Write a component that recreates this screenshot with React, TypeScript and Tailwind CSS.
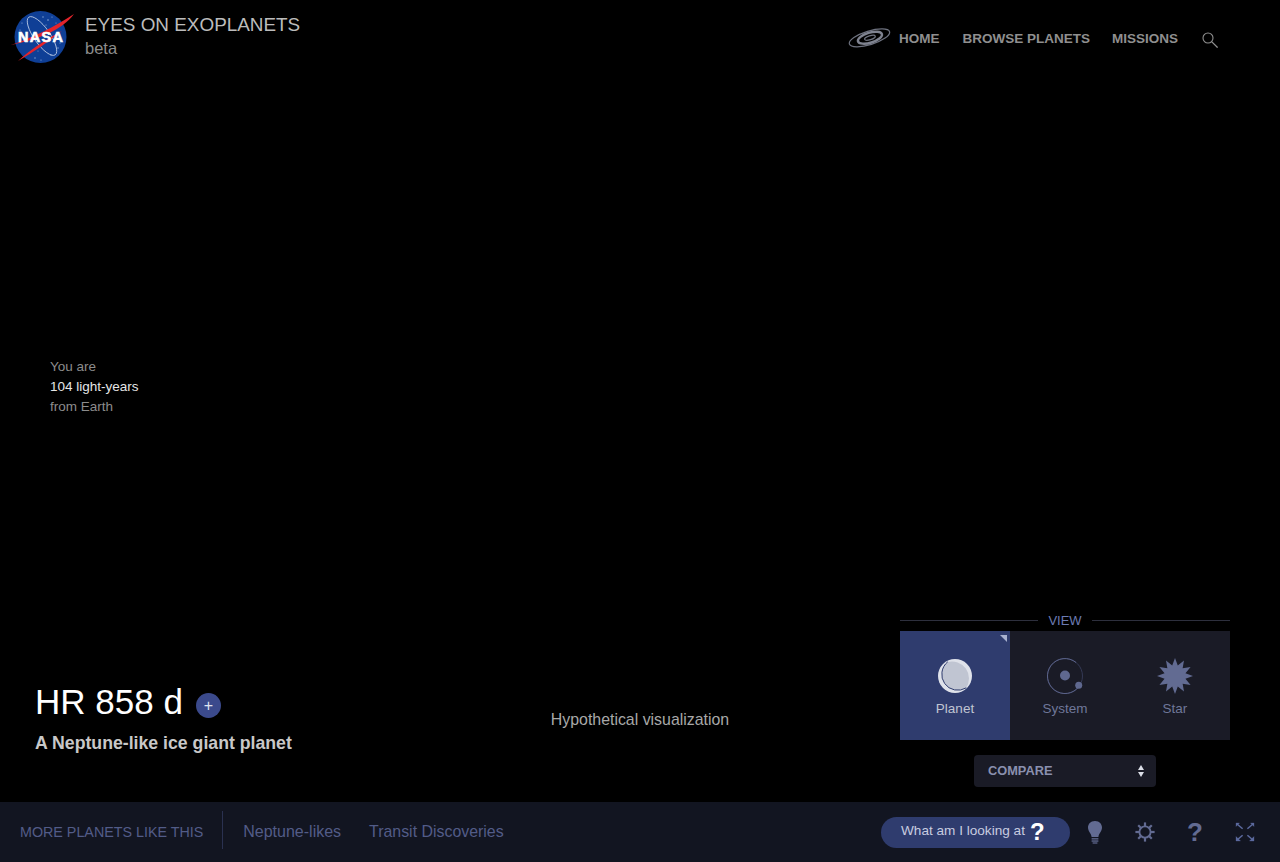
import React from "react";

const font = { fontFamily: '"Liberation Sans", Arial, sans-serif' };

function NasaLogo() {
  return (
    <svg width="66" height="56" viewBox="0 0 66 56" className="block">
      <circle cx="30.5" cy="27" r="26" fill="#0f3f96" />
      <g fill="#8fabd8">
        <circle cx="33" cy="7" r="0.7" /><circle cx="38" cy="10" r="0.8" /><circle cx="42" cy="7" r="0.6" />
        <circle cx="36" cy="15" r="0.6" /><circle cx="12" cy="13" r="0.6" /><circle cx="10" cy="20" r="0.6" />
        <circle cx="48" cy="38" r="0.7" /><circle cx="50" cy="33" r="0.6" /><circle cx="25" cy="48" r="0.7" />
        <circle cx="31" cy="50" r="0.6" /><circle cx="19" cy="43" r="0.6" /><circle cx="41" cy="45" r="0.7" />
        <circle cx="46" cy="13" r="0.5" /><circle cx="28" cy="41" r="0.5" />
      </g>
      <ellipse cx="32" cy="26" rx="23" ry="8" transform="rotate(55 32 26)" fill="none" stroke="#c2cfe8" strokeWidth="0.8" />
      <path d="M64 4C52 20 30 29 1 35C24 27 44 17 64 4Z" fill="#e3242b" />
      <path d="M8 51C20 40 32 32 48 23L52 21C38 32 24 42 8 51Z" fill="#e3242b" />
      <text x="8" y="32" textLength="45" lengthAdjust="spacing" fill="#ffffff" fontSize="14.5" fontWeight="700" stroke="#ffffff" strokeWidth="0.6" style={font}>NASA</text>
    </svg>
  );
}

function Galaxy() {
  return (
    <svg width="44" height="22" viewBox="0 0 44 22" fill="none" className="block">
      <g transform="rotate(-17 22 11)">
        <ellipse cx="22.5" cy="11" rx="21" ry="6.8" stroke="#6d717e" strokeWidth="1.2" />
        <ellipse cx="23" cy="11" rx="12.5" ry="5" stroke="#7f8390" strokeWidth="2.4" />
        <ellipse cx="23" cy="11" rx="5.5" ry="2" stroke="#6d717e" strokeWidth="1.3" />
      </g>
    </svg>
  );
}

function Search() {
  return (
    <svg width="16" height="16" viewBox="0 0 16 16" fill="none" stroke="#8f8f8f" className="block">
      <circle cx="6" cy="6" r="5" strokeWidth="1.1" />
      <path d="M9.6 9.6L15.6 15.6" strokeWidth="1.3" />
    </svg>
  );
}

function PlanetIcon() {
  return (
    <svg width="34" height="34" viewBox="0 0 34 34" className="block">
      <circle cx="17" cy="17" r="17" fill="#dfe2ea" />
      <path d="M9.5 3A16 16 0 0 0 28 29A17 17 0 0 0 9.5 3Z" fill="#c0c5d2" />
      <path d="M9.5 3A16 16 0 0 0 28 29" fill="none" stroke="#2f3c6e" strokeWidth="1" strokeLinecap="round" />
    </svg>
  );
}

function SystemIcon() {
  return (
    <svg width="38" height="38" viewBox="0 0 38 38" fill="none" className="block">
      <circle cx="19" cy="19" r="17.5" stroke="#343955" strokeWidth="1" />
      <path d="M33 29.5A17.5 17.5 0 1 1 30 5.5" stroke="#5b6389" strokeWidth="1" />
      <circle cx="19" cy="18.5" r="5" fill="#5f688f" />
      <circle cx="32.7" cy="28.3" r="3.5" fill="#5f688f" />
    </svg>
  );
}

function StarIcon() {
  const pts: string[] = [];
  for (let i = 0; i < 24; i++) {
    const r = i % 2 === 0 ? 18 : 10.8;
    const a = (i * Math.PI) / 12 - Math.PI / 2;
    pts.push(`${18 + r * Math.cos(a)},${18 + r * Math.sin(a)}`);
  }
  return (
    <svg width="36" height="36" viewBox="0 0 36 36" className="block">
      <polygon points={pts.join(" ")} fill="#626b92" />
    </svg>
  );
}

function Bulb() {
  return (
    <svg width="18" height="24" viewBox="0 0 18 24" className="block" fill="#626b92">
      <path d="M9 1C4.4 1 2 4.3 2 7.6C2 11.5 5 13 5.6 17H12.4C13 13 16 11.5 16 7.6C16 4.3 13.6 1 9 1Z" />
      <rect x="5.6" y="18.2" width="6.8" height="1.3" />
      <rect x="5.6" y="20.4" width="6.8" height="1.3" />
      <rect x="6.6" y="22.4" width="4.8" height="1.2" />
    </svg>
  );
}

function Gear() {
  const teeth = [0, 45, 90, 135, 180, 225, 270, 315];
  return (
    <svg width="20" height="20" viewBox="0 0 20 20" className="block">
      {teeth.map((t) => (
        <rect key={t} x="8.9" y="0.4" width="2.2" height="4" fill="#626b92" transform={`rotate(${t} 10 10)`} />
      ))}
      <circle cx="10" cy="10" r="5.6" fill="none" stroke="#626b92" strokeWidth="1.9" />
    </svg>
  );
}

function Expand() {
  return (
    <svg width="20" height="20" viewBox="0 0 20 20" className="block" fill="#5c6a9e" stroke="#5c6a9e">
      <path d="M2 2L7.6 6.8" strokeWidth="1.5" fill="none" />
      <path d="M18 2L12.4 6.8" strokeWidth="1.5" fill="none" />
      <path d="M2 18L7.6 13.2" strokeWidth="1.5" fill="none" />
      <path d="M18 18L12.4 13.2" strokeWidth="1.5" fill="none" />
      <path d="M1 14.5V19H5.5Z" strokeWidth="0.3" />
      <path d="M19 14.5V19H14.5Z" strokeWidth="0.3" />
      <path d="M1 1H4.5L1 4.5Z" strokeWidth="0.3" />
      <path d="M19 1H15.5L19 4.5Z" strokeWidth="0.3" />
    </svg>
  );
}

export default function App() {
  return (
    <div className="h-[862px] w-[1280px] overflow-hidden bg-black flex flex-col" style={font}>
      <header className="h-[75px] flex shrink-0">
        <div className="flex w-[847px] pl-[10px] pt-[10px]">
          <NasaLogo />
          <div className="ml-[9px] mt-[4px]">
            <div className="text-[18.9px] leading-[22px] text-[#bcbcbc]">EYES ON EXOPLANETS</div>
            <div className="text-[16.5px] leading-[24px] text-[#8c8c8c]">beta</div>
          </div>
        </div>
        <nav className="flex items-start pt-[27px]">
          <Galaxy />
          <a className="ml-[8px] mt-[3px] text-[13.5px] leading-[18px] font-bold text-[#8f8f8f]">HOME</a>
          <a className="ml-[23px] mt-[3px] text-[13.5px] leading-[18px] font-bold text-[#8f8f8f]">BROWSE PLANETS</a>
          <a className="ml-[22px] mt-[3px] text-[13.5px] leading-[18px] font-bold text-[#8f8f8f]">MISSIONS</a>
          <div className="ml-[24px] mt-[5px]"><Search /></div>
        </nav>
      </header>

      <main className="flex-1 flex relative">
        <div className="w-[510px] shrink-0 flex flex-col pl-[35px]">
          <div className="ml-[15px] mt-[282px] text-[13.5px] leading-[20px] text-[#8c8c8c]">
            <div>You are</div>
            <div className="text-[#e6e6e6]">104 light-years</div>
            <div>from Earth</div>
          </div>
          <div className="mt-[263px] flex items-center">
            <h1 className="text-[35px] leading-[44px] font-normal text-white">HR 858 d</h1>
            <button className="ml-[13px] mt-[6px] w-[25px] h-[25px] rounded-full bg-[#3b4a8c] text-[#dfe3f0] text-[16px] leading-[23px] text-center">+</button>
          </div>
          <div className="mt-[7px] text-[17.7px] leading-[24px] font-bold text-[#c8c8c8]">A Neptune-like ice giant planet</div>
        </div>

        <div className="w-[260px] shrink-0 pt-[635px] text-center text-[15.9px] leading-[20px] text-[#a8a8a8]">Hypothetical visualization</div>

        <div className="w-[330px] ml-[130px] shrink-0 pt-[535px] flex flex-col items-center">
          <div className="w-full h-[21px] flex items-center gap-[10px]">
            <div className="flex-1 h-px bg-[#2d2f3d]" />
            <span className="text-[13px] leading-[18px] text-[#6c7bb3]">VIEW</span>
            <div className="flex-1 h-px bg-[#2d2f3d]" />
          </div>
          <div className="w-full h-[109px] flex bg-[#1a1b26]">
            <div className="relative w-[110px] bg-[#2f3c6e] flex flex-col items-center pt-[28px]">
              <div className="absolute right-[3px] top-[4px] w-0 h-0 border-t-[7px] border-l-[7px] border-t-[#a9b2d0] border-l-transparent" />
              <PlanetIcon />
              <span className="mt-[7px] text-[13.5px] leading-[18px] text-[#c0c5d2]">Planet</span>
            </div>
            <div className="w-[110px] flex flex-col items-center pt-[26px]">
              <SystemIcon />
              <span className="mt-[5px] text-[13.5px] leading-[18px] text-[#6f7799]">System</span>
            </div>
            <div className="w-[110px] flex flex-col items-center pt-[27px]">
              <StarIcon />
              <span className="mt-[6px] text-[13.5px] leading-[18px] text-[#6f7799]">Star</span>
            </div>
          </div>
          <div className="mt-[15px] w-[182px] h-[32px] rounded-[4px] bg-[#1a1b26] flex items-center justify-between pl-[14px] pr-[11px]">
            <span className="-mt-[1px] text-[12.8px] font-bold text-[#8a90ae]">COMPARE</span>
            <svg width="8" height="14" viewBox="0 0 8 14" fill="#dcdfe8" className="block">
              <path d="M4 1L7 6H1Z" />
              <path d="M4 13L7 8H1Z" />
            </svg>
          </div>
        </div>
      </main>

      <footer className="h-[60px] shrink-0 bg-[#121521] flex items-center">
        <span className="ml-[20px] text-[14.3px] leading-[20px] text-[#525c88]">MORE PLANETS LIKE THIS</span>
        <div className="ml-[19px] -mt-[4px] w-px h-[38px] bg-[#2a3150]" />
        <a className="ml-[20px] text-[16px] leading-[20px] text-[#525c88]">Neptune-likes</a>
        <a className="ml-[28px] text-[15.9px] leading-[20px] text-[#525c88]">Transit Discoveries</a>
        <div className="ml-auto flex items-center">
          <button className="w-[189px] h-[31px] rounded-full bg-[#2f3c6e] flex items-center pl-[20px] mr-[15px]">
            <span className="-mt-[1px] text-[13.6px] text-[#c8cce0]">What am I looking at</span>
            <span className="ml-[5px] text-[24px] leading-[24px] font-bold text-white">?</span>
          </button>
          <div className="w-[20px] flex justify-center"><Bulb /></div>
          <div className="ml-[30px] w-[20px]"><Gear /></div>
          <span className="ml-[30px] w-[20px] text-center text-[26px] leading-[28px] font-bold text-[#626b92]">?</span>
          <div className="ml-[30px] mr-[25px] w-[20px]"><Expand /></div>
        </div>
      </footer>
    </div>
  );
}
